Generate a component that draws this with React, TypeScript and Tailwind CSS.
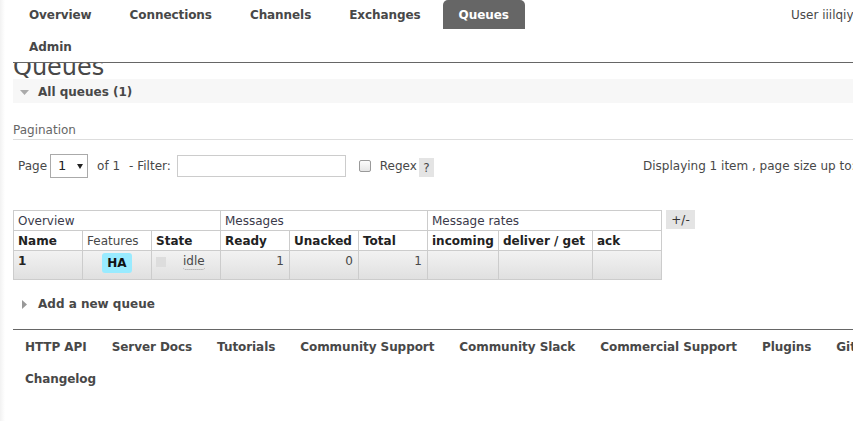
import React from "react";

const tabs = ["Overview", "Connections", "Channels", "Exchanges", "Queues", "Admin"];
const footerLinks = [
  "HTTP API",
  "Server Docs",
  "Tutorials",
  "Community Support",
  "Community Slack",
  "Commercial Support",
  "Plugins",
  "GitHub",
  "Changelog",
];

function HeadCell({ children, bold = true }: { children: React.ReactNode; bold?: boolean }) {
  return (
    <div className={`bg-white pl-[4px] pt-[3px] whitespace-nowrap ${bold ? "font-bold text-[#222]" : "text-[#484848]"}`}>
      {children}
    </div>
  );
}

function DataCell({ children, className = "" }: { children?: React.ReactNode; className?: string }) {
  return (
    <div className={`bg-linear-to-b from-[#f2f2f2] to-[#e0e0e0] pt-[3px] ${className}`}>{children}</div>
  );
}

export default function App() {
  return (
    <div className="w-[853px] h-[421px] overflow-hidden bg-white bg-[linear-gradient(to_right,#f2f2f2,#ffffff_5px)] font-['DejaVu_Sans',sans-serif] text-[12px] leading-[14px] text-[#484848]">
      <div className="w-[916px] px-[13px]">
        <header className="relative z-10 flex bg-white border-b border-[#666] pb-[1px]">
          <ul className="w-[560px] flex flex-wrap gap-x-[6px] gap-y-[3px]">
            {tabs.map((t) => (
              <li
                key={t}
                className={
                  t === "Queues"
                    ? "h-[29px] px-[16px] pt-[8px] font-bold tracking-[-0.08px] bg-[#666] text-white rounded-t-[5px]"
                    : "h-[29px] px-[16px] pt-[8px] font-bold tracking-[-0.08px] text-[#484848]"
                }
              >
                {t}
              </li>
            ))}
          </ul>
          <div className="ml-auto w-[112px] shrink-0 pt-[8px] whitespace-nowrap">User iiilqiy</div>
        </header>

        <h1 className="-mt-[10px] h-[26px] text-[24px] leading-[28px] font-normal text-[#484848]">Queues</h1>

        <div className="h-[24px] bg-[#f7f7f7] pt-[6px] pl-[7px]">
          <div className="flex items-center h-[14px]">
            <svg width="9" height="5" viewBox="0 0 9 5" className="mt-[1px]">
              <polygon points="0,0 9,0 4.5,5" fill="#aaaaaa" />
            </svg>
            <span className="ml-[9px] font-bold">All queues (1)</span>
          </div>
        </div>

        <h3 className="mt-[20px] pb-[2px] border-b border-[#ddd] text-[#666] font-normal">Pagination</h3>

        <div className="mt-[14px] h-[24px] flex items-center pl-[5px] whitespace-nowrap">
          <span>Page</span>
          <div className="ml-[3px] w-[38px] h-[24px] border border-[#aaa] bg-white flex items-center pl-[7px] text-[13px] text-[#222]">
            <span>1</span>
            <svg width="6" height="5" viewBox="0 0 6 5" className="ml-[11px]">
              <polygon points="0,0 6,0 3,5" fill="#222" />
            </svg>
          </div>
          <span className="ml-[9px]">of 1</span>
          <span className="ml-[9px]">- Filter:</span>
          <div className="ml-[6px] w-[169px] h-[22px] border border-[#ccc] bg-white" />
          <div className="ml-[13px] w-[12px] h-[12px] border border-[#9a9a9a] rounded-[2px] bg-linear-to-b from-[#fcfcfc] to-[#e6e6e6]" />
          <span className="ml-[9px]">Regex</span>
          <div className="ml-[2px] w-[15px] h-[19px] bg-[#e4e4e4] self-end mb-[1px] flex items-center justify-center">?</div>
          <span className="ml-auto w-[260px] shrink-0">Displaying 1 item , page size up to: 100</span>
        </div>

        <div className="mt-[32px] flex items-start">
          <div className="grid grid-cols-[68px_68px_68px_68px_68px_68px_70px_93px_68px] grid-rows-[19px_19px_28px] gap-px p-px bg-[#ccc]">
            <div className="col-span-3 bg-white pl-[4px] pt-[3px] text-[#3a3a4a]">Overview</div>
            <div className="col-span-3 bg-white pl-[4px] pt-[3px] text-[#3a3a4a]">Messages</div>
            <div className="col-span-3 bg-white pl-[4px] pt-[3px] text-[#3a3a4a]">Message rates</div>

            <HeadCell>Name</HeadCell>
            <HeadCell bold={false}>Features</HeadCell>
            <HeadCell>State</HeadCell>
            <HeadCell>Ready</HeadCell>
            <HeadCell>Unacked</HeadCell>
            <HeadCell>Total</HeadCell>
            <HeadCell>incoming</HeadCell>
            <HeadCell>deliver / get</HeadCell>
            <HeadCell>ack</HeadCell>

            <DataCell className="pl-[4px] font-bold text-[#222]">1</DataCell>
            <DataCell className="!pt-[2px] flex justify-center items-start">
              <div className="w-[30px] h-[20px] rounded-[3px] bg-[#99ebff] flex items-center justify-center font-bold text-[#111]">HA</div>
            </DataCell>
            <DataCell className="flex items-start pl-[4px]">
              <div className="mt-[3px] w-[10px] h-[10px] bg-[#dddddd]" />
              <span className="ml-[17px] border-b border-dotted border-[#999] rounded-b-[3px] pb-[1px] text-[#484848]">idle</span>
            </DataCell>
            <DataCell className="pr-[5px] text-right">1</DataCell>
            <DataCell className="pr-[5px] text-right">0</DataCell>
            <DataCell className="pr-[5px] text-right">1</DataCell>
            <DataCell />
            <DataCell />
            <DataCell />
          </div>
          <div className="ml-[4px] w-[29px] h-[19px] bg-[#e4e4e4] flex items-center justify-center text-[#333]">+/-</div>
        </div>

        <div className="mt-[17px] flex items-center h-[14px] pl-[9px]">
          <svg width="5" height="9" viewBox="0 0 5 9">
            <polygon points="0,0 5,4.5 0,9" fill="#999999" />
          </svg>
          <span className="ml-[11px] font-bold">Add a new queue</span>
        </div>

        <footer className="mt-[18px] border-t border-[#666] pt-[10px] pl-[12px] flex flex-wrap gap-x-[25px] gap-y-[18px] font-bold tracking-[-0.07px] text-[#484848]">
          {footerLinks.map((l) => (
            <span key={l} className="whitespace-nowrap">
              {l}
            </span>
          ))}
        </footer>
      </div>
    </div>
  );
}
